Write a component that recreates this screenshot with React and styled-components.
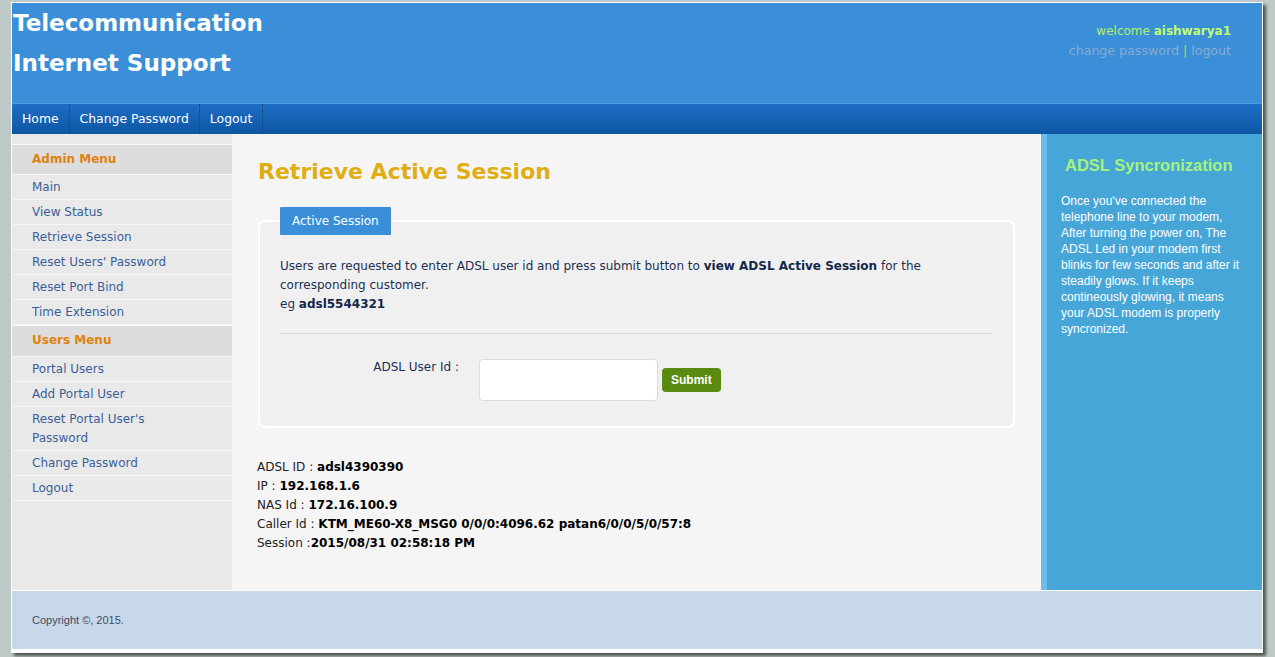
import React from 'react';
import styled, {createGlobalStyle, css} from 'styled-components';

const GlobalStyle = createGlobalStyle`
    html, body {
        margin: 0;
        padding: 0;
    }
    body {
        background: #bfc9c8;
        font-family: "DejaVu Sans", Verdana, sans-serif;
        width: 1275px;
        height: 657px;
        overflow: hidden;
    }
`;

const Wrapper = styled.div`
    margin: 2px 0 0 11px;
    width: 1250px;
    background: #fff;
    border: 1px solid #fff;
    padding-bottom: 3px;
    box-shadow: 3px 3px 3px rgba(40, 40, 40, 0.75);
`;

const Header = styled.div`
    height: 100px;
    background: #3a8fd8;
    display: flex;
    justify-content: space-between;
`;

const Logo = styled.h1`
    margin: 0;
    padding: 0 0 0 1px;
    color: #fff;
    font-size: 23px;
    line-height: 40px;
    font-weight: bold;
`;

const UserBox = styled.div`
    padding: 19px 31px 0 0;
    text-align: right;
    font-size: 12px;
    line-height: 19px;
`;

const Welcome = styled.div`
    color: #b4f068;
    b {
        color: #c0ff70;
    }
`;

const UserLinks = styled.div`
    color: #88aad0;
    font-size: 12.6px;
    span {
        color: #a8d870;
    }
`;

const Nav = styled.div`
    height: 30px;
    display: flex;
    border-top: 1px solid #4f9be0;
    background: linear-gradient(#1e6ec4, #0f56a4);
`;

const NavItem = styled.div`
    padding: 0 10px;
    color: #fff;
    font-size: 12.4px;
    line-height: 30px;
    border-right: 1px dotted #0a3f78;
`;

const Main = styled.div`
    display: flex;
    height: 456px;
`;

const Sidebar = styled.div`
    width: 220px;
    background: #e9e9e9;
    padding-top: 10px;
`;

const MenuHead = styled.div`
    border-top: 1px solid #fafafa;
    background: #dddddd;
    color: #e0820c;
    font-weight: bold;
    font-size: 12px;
    padding: 7px 20px 0;
    height: 22px;
    ${props => props.second && css`
        height: 23px;
    `}
`;

const MenuItem = styled.div`
    border-top: 1px solid #f6f6f6;
    color: #3b5f98;
    font-size: 12px;
    line-height: 19px;
    padding: 3px 40px 2px 20px;
    &:last-child {
        border-bottom: 1px solid #f6f6f6;
    }
`;

const Content = styled.div`
    flex: 1;
    background: #f5f5f5;
    padding: 22px 26px 0;
    color: #1c3150;
    font-size: 12px;
`;

const Title = styled.h2`
    margin: 0;
    color: #e0ad12;
    font-size: 22px;
    line-height: 32px;
    font-weight: bold;
`;

const Fieldset = styled.fieldset`
    margin: 19px 0 0;
    width: 713px;
    padding: 10px 20px 25px;
    border: 2px solid #fff;
    border-radius: 7px;
    background: #f0f0f0;
`;

const Legend = styled.legend`
    margin-left: 0;
    padding: 7px 12px 7px;
    background: #3a8fd8;
    color: #fff;
    font-size: 12px;
    border-radius: 1px;
`;

const Intro = styled.p`
    margin: 12px 0 0;
    line-height: 19px;
    b {
        color: #14284a;
    }
`;

const Rule = styled.hr`
    margin: 19px 0 0;
    border: 0;
    border-top: 1px solid #d9d9d9;
`;

const FormRow = styled.div`
    display: flex;
    align-items: center;
    margin-top: 25px;
`;

const Label = styled.label`
    width: 179px;
    text-align: right;
    padding-right: 20px;
    align-self: flex-start;
    padding-top: 1px;
`;

const Input = styled.input`
    box-sizing: border-box;
    border: 1px solid #dcdcdc;
    border-radius: 4px;
    background: #fff;
    padding: 0 6px;
    height: 42px;
    width: 179px;
`;

const Submit = styled.button`
    margin-left: 4px;
    height: 24px;
    padding: 0 9px;
    border: 0;
    border-radius: 4px;
    background: #5a8a0f;
    color: #fff;
    font-family: "Liberation Sans", Arial, sans-serif;
    font-weight: bold;
    font-size: 12px;
`;

const Result = styled.div`
    margin-top: 30px;
    margin-left: -1px;
    color: #222;
    line-height: 19px;
    b {
        color: #000;
    }
`;

const RightBar = styled.div`
    width: 215px;
    background: #47a6d8;
    border-left: 6px solid #6cbdee;
    padding: 20px 0 0;
    font-family: "Liberation Sans", Arial, sans-serif;
`;

const RightTitle = styled.h3`
    margin: 0;
    padding-left: 18px;
    color: #a6f27c;
    font-size: 16.5px;
    line-height: 22px;
`;

const RightText = styled.p`
    margin: 17px 0 0;
    padding: 0 14px;
    color: #fff;
    font-size: 12px;
    line-height: 16px;
`;

const Footer = styled.div`
    border-top: 1px solid #fff;
    height: 58px;
    background: #c7d8ea;
    color: #3f4b66;
    font-family: "Liberation Sans", Arial, sans-serif;
    font-size: 11px;
    line-height: 58px;
    padding-left: 20px;
`;

const adminMenu = ['Main', 'View Status', 'Retrieve Session', "Reset Users' Password", 'Reset Port Bind', 'Time Extension'];
const usersMenu = ['Portal Users', 'Add Portal User', "Reset Portal User's Password", 'Change Password', 'Logout'];

const App = () => {
    return (
        <>
            <GlobalStyle/>
            <Wrapper>
                <Header>
                    <Logo>Telecommunication<br/>Internet Support</Logo>
                    <UserBox>
                        <Welcome>welcome <b>aishwarya1</b></Welcome>
                        <UserLinks>change password <span>|</span> logout</UserLinks>
                    </UserBox>
                </Header>
                <Nav>
                    <NavItem>Home</NavItem>
                    <NavItem>Change Password</NavItem>
                    <NavItem>Logout</NavItem>
                </Nav>
                <Main>
                    <Sidebar>
                        <div>
                            <MenuHead>Admin Menu</MenuHead>
                            {adminMenu.map(item => <MenuItem key={item}>{item}</MenuItem>)}
                        </div>
                        <div>
                            <MenuHead second>Users Menu</MenuHead>
                            {usersMenu.map(item => <MenuItem key={item}>{item}</MenuItem>)}
                        </div>
                    </Sidebar>
                    <Content>
                        <Title>Retrieve Active Session</Title>
                        <Fieldset>
                            <Legend>Active Session</Legend>
                            <Intro>
                                Users are requested to enter ADSL user id and press submit button to <b>view ADSL Active Session</b> for the corresponding customer.<br/>
                                eg <b>adsl5544321</b>
                            </Intro>
                            <Rule/>
                            <FormRow>
                                <Label>ADSL User Id :</Label>
                                <Input type="text"/>
                                <Submit>Submit</Submit>
                            </FormRow>
                        </Fieldset>
                        <Result>
                            <div>ADSL ID : <b>adsl4390390</b></div>
                            <div>IP : <b>192.168.1.6</b></div>
                            <div>NAS Id : <b>172.16.100.9</b></div>
                            <div>Caller Id : <b>KTM_ME60-X8_MSG0 0/0/0:4096.62 patan6/0/0/5/0/57:8</b></div>
                            <div>Session :<b>2015/08/31 02:58:18 PM</b></div>
                        </Result>
                    </Content>
                    <RightBar>
                        <RightTitle>ADSL Syncronization</RightTitle>
                        <RightText>
                            Once you've connected the telephone line to your modem, After turning the power on, The ADSL Led in your modem first blinks for few seconds and after it steadily glows. If it keeps contineously glowing, it means your ADSL modem is properly syncronized.
                        </RightText>
                    </RightBar>
                </Main>
                <Footer>Copyright ©, 2015.</Footer>
            </Wrapper>
        </>
    );
};

export default App;
